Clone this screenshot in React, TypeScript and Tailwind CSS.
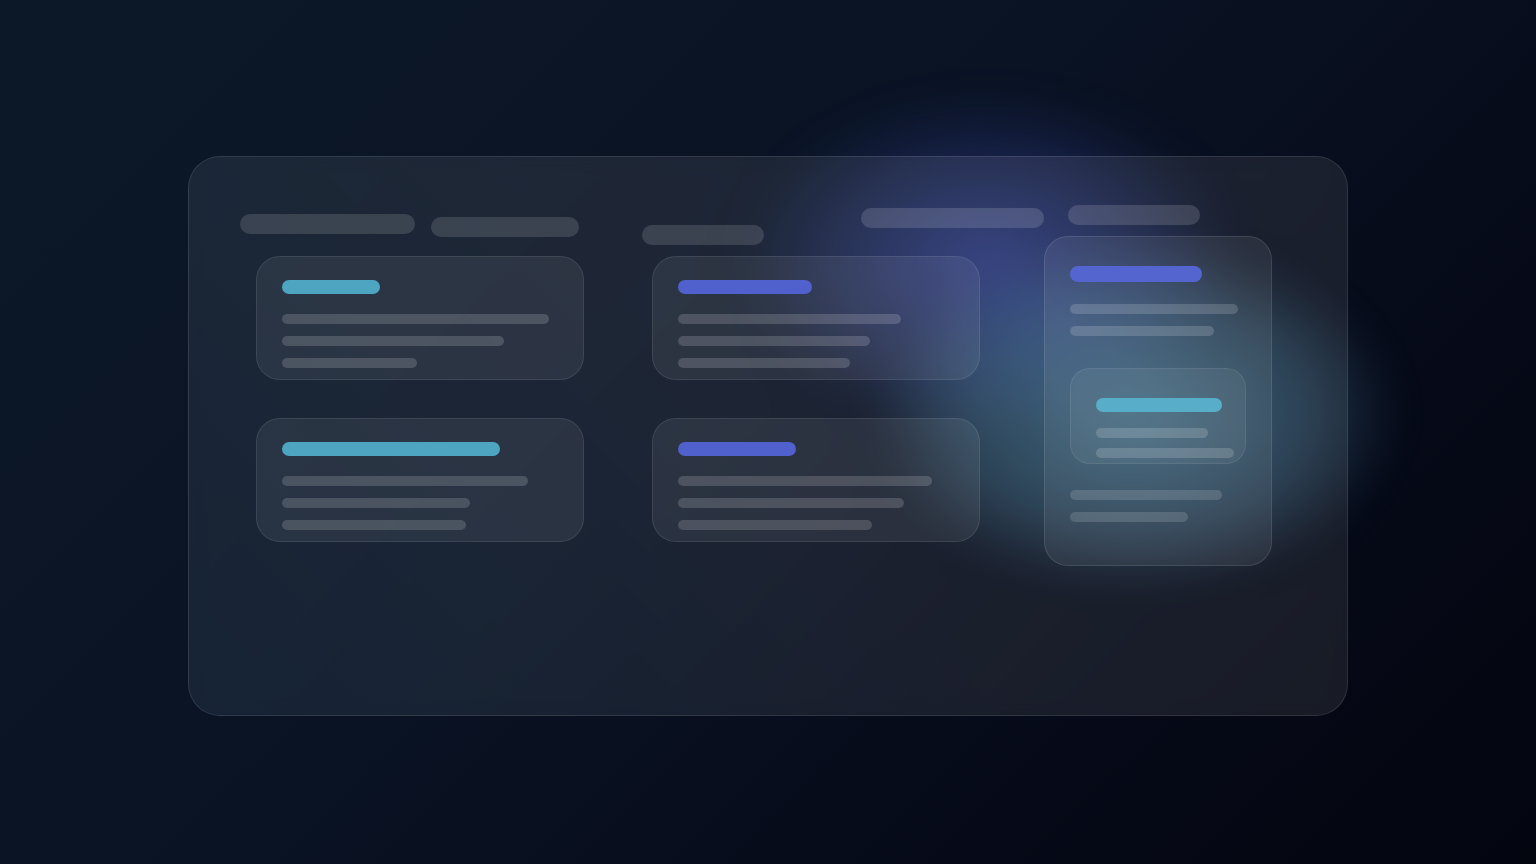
import React from "react";

type CardProps = {
  accent: "cyan" | "indigo";
  title: number;
  lines: number[];
};

const ACCENT = {
  cyan: "bg-[#4ea5c2]",
  indigo: "bg-[#5060cc]",
};

function SkeletonCard({ accent, title, lines }: CardProps) {
  return (
    <div className="w-[328px] h-[124px] rounded-[24px] border border-white/[0.09] bg-white/[0.07] px-[25px] pt-[23px]">
      <div className={`h-[14px] rounded-full ${ACCENT[accent]}`} style={{ width: title }} />
      <div className="mt-[20px] flex flex-col gap-[12px]">
        {lines.map((w, i) => (
          <div key={i} className="h-[10px] rounded-full bg-white/[0.16]" style={{ width: w }} />
        ))}
      </div>
    </div>
  );
}

export default function App() {
  return (
    <div className="relative h-[864px] w-full overflow-hidden bg-[linear-gradient(135deg,#0c1828_0%,#0a1324_45%,#060a18_75%,#03060f_100%)] font-['Inter',sans-serif]">
      {/* glow blobs */}
      <div className="pointer-events-none absolute left-[740px] top-[95px] h-[340px] w-[500px] rounded-full bg-[radial-gradient(closest-side,rgba(72,92,215,0.5),rgba(72,92,210,0.22)_60%,transparent)] blur-[20px]" />
      <div className="pointer-events-none absolute left-[870px] top-[240px] h-[350px] w-[530px] rounded-full bg-[radial-gradient(closest-side,rgba(80,155,190,0.55),rgba(78,145,180,0.3)_65%,transparent)] blur-[18px]" />

      <div className="relative flex justify-center pt-[156px]">
        <div className="flex h-[560px] w-[1160px] items-start rounded-[32px] border border-white/[0.1] bg-[linear-gradient(45deg,rgba(70,100,120,0.2),rgba(255,255,255,0.08)_50%,rgba(255,255,255,0.08))] pl-[51px] pt-[48px] backdrop-blur-sm">
          {/* column A */}
          <div className="w-[344px]">
            <div className="flex h-[51px] items-start">
              <div className="mt-[9px] h-[20px] w-[175px] rounded-full bg-white/[0.13]" />
              <div className="ml-[16px] mt-[12px] h-[20px] w-[148px] rounded-full bg-white/[0.13]" />
            </div>
            <div className="ml-[16px] flex flex-col gap-[38px]">
              <SkeletonCard accent="cyan" title={98} lines={[267, 222, 135]} />
              <SkeletonCard accent="cyan" title={218} lines={[246, 188, 184]} />
            </div>
          </div>

          {/* column B */}
          <div className="ml-[58px] w-[402px]">
            <div className="flex h-[51px] items-start">
              <div className="mt-[20px] h-[20px] w-[122px] rounded-full bg-white/[0.13]" />
              <div className="ml-[97px] mt-[3px] h-[20px] w-[184px] rounded-full bg-white/[0.14]" />
            </div>
            <div className="ml-[10px] flex flex-col gap-[38px]">
              <SkeletonCard accent="indigo" title={134} lines={[223, 192, 172]} />
              <SkeletonCard accent="indigo" title={118} lines={[254, 226, 194]} />
            </div>
          </div>

          {/* column C */}
          <div className="w-[228px]">
            <div className="ml-[24px] h-[20px] w-[132px] rounded-full bg-white/[0.14]" />
            <div className="mt-[11px] h-[330px] w-[228px] rounded-[24px] border border-white/[0.1] bg-white/[0.07] px-[25px] pt-[29px]">
              <div className="h-[16px] w-[132px] rounded-full bg-[#5565d0]" />
              <div className="mt-[22px] flex flex-col gap-[12px]">
                <div className="h-[10px] w-[168px] rounded-full bg-white/[0.16]" />
                <div className="h-[10px] w-[144px] rounded-full bg-white/[0.16]" />
              </div>
              <div className="mt-[32px] h-[96px] w-[176px] rounded-[20px] border border-white/[0.08] bg-white/[0.06] px-[25px] pt-[29px]">
                <div className="h-[14px] w-[126px] rounded-full bg-[#58aec8]" />
                <div className="mt-[16px] h-[10px] w-[112px] rounded-full bg-white/[0.16]" />
                <div className="mt-[10px] h-[10px] w-[138px] rounded-full bg-white/[0.16]" />
              </div>
              <div className="mt-[26px] flex flex-col gap-[12px]">
                <div className="h-[10px] w-[152px] rounded-full bg-white/[0.14]" />
                <div className="h-[10px] w-[118px] rounded-full bg-white/[0.14]" />
              </div>
            </div>
          </div>
        </div>
      </div>
    </div>
  );
}
